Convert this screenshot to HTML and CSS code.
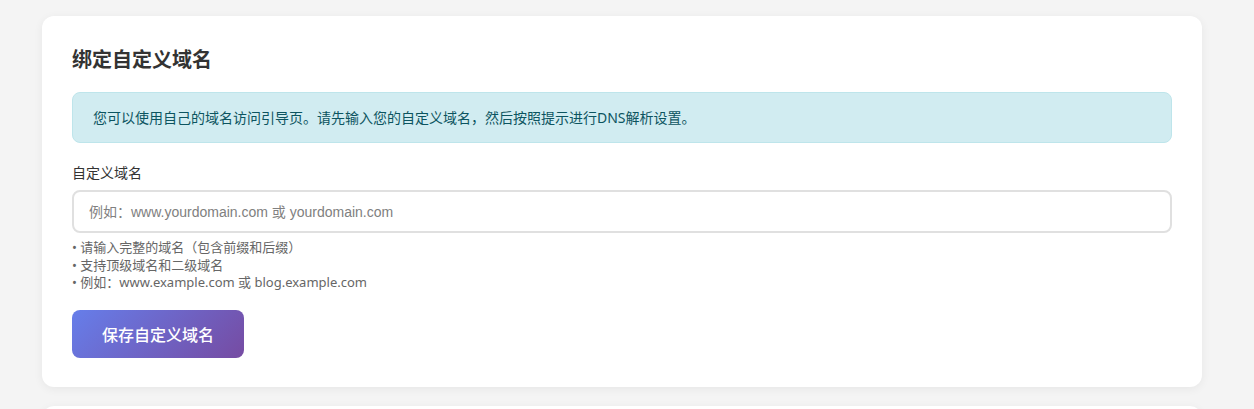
FILE: index.html
```html
<!DOCTYPE html>
<html lang="zh-CN">
<head>
<meta charset="UTF-8">
<title>绑定自定义域名</title>
<link rel="stylesheet" href="styles.css">
</head>
<body>
<div class="container">
  <div class="card">
    <h2 class="card-title">绑定自定义域名</h2>
    <div class="alert">您可以使用自己的域名访问引导页。请先输入您的自定义域名，然后按照提示进行DNS解析设置。</div>
    <div class="form-group">
      <label class="form-label" for="domain">自定义域名</label>
      <input class="form-input" id="domain" type="text" placeholder="例如：www.yourdomain.com 或 yourdomain.com">
      <div class="form-hint">
        <div>• 请输入完整的域名（包含前缀和后缀）</div>
        <div>• 支持顶级域名和二级域名</div>
        <div>• 例如：www.example.com 或 blog.example.com</div>
      </div>
    </div>
    <button class="btn-primary" type="button">保存自定义域名</button>
  </div>
  <div class="card card-next"></div>
</div>
</body>
</html>
```
FILE: styles.css
```css
* { box-sizing: border-box; }
html, body { margin: 0; padding: 0; }
body {
  background: #f4f4f4;
  font-family: "Noto Sans", "Noto Sans CJK SC", sans-serif;
  color: #333;
  overflow: hidden;
  height: 409px;
}
.container {
  padding: 16px 52px 0 42px;
  display: flex;
  flex-direction: column;
  gap: 19px;
}
.card {
  background: #fff;
  border-radius: 12px;
  box-shadow: 0 2px 10px rgba(0,0,0,0.06);
  padding: 30px 30px 29px;
}
.card-next { height: 40px; }
.card-title {
  margin: 0 0 18px;
  font-size: 20px;
  font-weight: 700;
  line-height: 28px;
  color: #333;
}
.alert {
  background: #d1ecf1;
  border: 1px solid #bee5eb;
  color: #0c5460;
  border-radius: 8px;
  padding: 15px 20px;
  font-size: 14px;
  line-height: 19px;
  margin-bottom: 20px;
}
.form-group { margin-bottom: 18px; }
.form-label {
  display: block;
  font-size: 14px;
  line-height: 20px;
  color: #333;
  margin-bottom: 7px;
}
.form-input {
  display: block;
  width: 100%;
  height: 43px;
  border: 2px solid #e0e0e0;
  border-radius: 8px;
  padding: 0 15px;
  font-family: "Liberation Sans", "Noto Sans CJK SC", sans-serif;
  font-size: 14px;
  color: #333;
  background: #fff;
  outline: none;
}
.form-input::placeholder { color: #808080; }
.form-hint {
  margin-top: 6px;
  font-size: 13px;
  line-height: 17.5px;
  color: #666;
}
.btn-primary {
  display: inline-block;
  align-self: flex-start;
  height: 48px;
  padding: 0 30px;
  border: none;
  border-radius: 8px;
  background: linear-gradient(135deg, #667eea 0%, #764ba2 100%);
  color: #fff;
  font-family: inherit;
  font-size: 16px;
  font-weight: 500;
  cursor: pointer;
}
```
